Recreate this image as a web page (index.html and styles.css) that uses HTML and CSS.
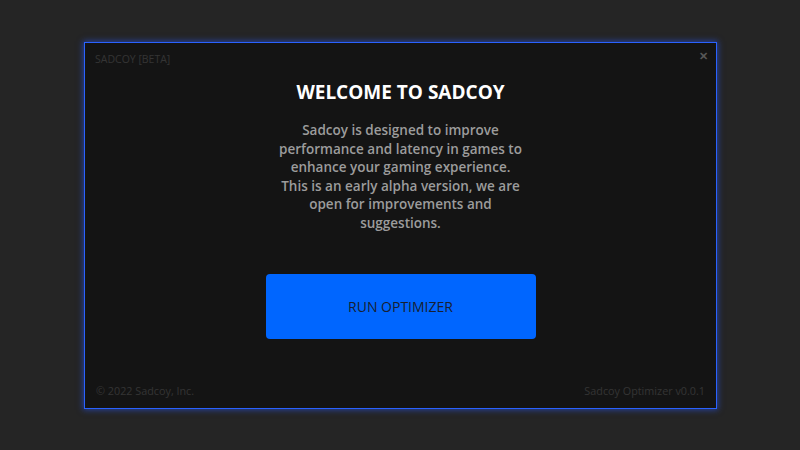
FILE: index.html
```html
<!DOCTYPE html>
<html>
<head>
<meta charset="utf-8">
<link rel="stylesheet" href="styles.css">
</head>
<body>
<div class="stage">
  <div class="window">
    <div class="topbar">
      <span class="brand">SADCOY [BETA]</span>
      <span class="close">&#x2715;</span>
    </div>
    <div class="content">
      <h1 class="title">WELCOME TO SADCOY</h1>
      <p class="desc">Sadcoy is designed to improve<br>performance and latency in games to<br>enhance your gaming experience.<br>This is an early alpha version, we are<br>open for improvements and<br>suggestions.</p>
      <button class="run">RUN OPTIMIZER</button>
    </div>
    <div class="footer">
      <span>&copy; 2022 Sadcoy, Inc.</span>
      <span>Sadcoy Optimizer v0.0.1</span>
    </div>
  </div>
</div>
</body>
</html>
```
FILE: styles.css
```css
* { box-sizing: border-box; }
html, body { margin: 0; padding: 0; }
body {
  width: 800px;
  height: 450px;
  background: #252525;
  font-family: "Open Sans", "Noto Sans", sans-serif;
  overflow: hidden;
}
.stage {
  width: 800px;
  height: 450px;
  padding-top: 42px;
  padding-left: 84px;
}
.window {
  width: 633px;
  height: 367px;
  background: #141414;
  border: 1px solid #2a62ff;
  box-shadow: 0 0 6px 1px rgba(40, 90, 255, 0.55);
  display: flex;
  flex-direction: column;
}
.topbar {
  display: flex;
  justify-content: space-between;
  align-items: center;
  padding: 6px 8px 0 10px;
  height: 24px;
}
.brand {
  font-size: 10.5px;
  color: #343434;
  margin-top: 2px;
}
.close {
  font-size: 11px;
  color: #575757;
  font-weight: 700;
  margin-top: -5px;
}
.content {
  flex: 1;
  display: flex;
  flex-direction: column;
  align-items: center;
}
.title {
  margin: 12px 0 0 0;
  font-size: 19px;
  font-weight: 700;
  color: #ffffff;
  line-height: 26px;
}
.desc {
  margin: 16px 0 0 0;
  width: 280px;
  text-align: center;
  font-size: 13.5px;
  font-weight: 600;
  line-height: 18.6px;
  color: #9c9c9c;
}
.run {
  margin-top: 41px;
  width: 270px;
  height: 65px;
  border: none;
  border-radius: 4px;
  background: #0066ff;
  color: #182030;
  font-family: "Open Sans", "Noto Sans", sans-serif;
  font-size: 14px;
  font-weight: 500;
}
.footer {
  display: flex;
  justify-content: space-between;
  padding: 0 11px 10px 11px;
  font-size: 10.8px;
  color: #343434;
}
```
